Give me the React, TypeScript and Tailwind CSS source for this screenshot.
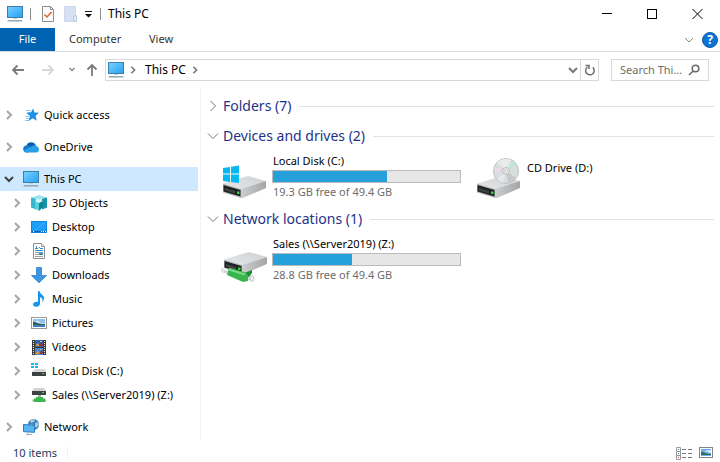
import { useState } from "react";
import type { ReactNode } from "react";

type IconProps = { className?: string };

const PcIcon = ({ className = "" }: IconProps) => (
  <svg className={`h-4 w-4 shrink-0 ${className}`} viewBox="0 0 16 16">
    <defs>
      <linearGradient id="screen" x1="0" y1="0" x2="1" y2="1">
        <stop offset="0" stopColor="#7cd0ff" />
        <stop offset="0.5" stopColor="#4dbafa" />
        <stop offset="1" stopColor="#2b9fee" />
      </linearGradient>
    </defs>
    <rect x="0.5" y="0.5" width="15" height="11" fill="url(#screen)" stroke="#3c7fa8" />
    <rect x="6" y="12" width="4" height="1" fill="#c3cfd8" />
    <path d="M1.500 14h13l1.500 1.500H0z" fill="#93a5b3" />
  </svg>
);

const StarIcon = () => (
  <svg className="h-4 w-4 shrink-0" viewBox="0 0 16 16">
    <path d="M3 3.500h5M4 5.500h4M2 9.500h4M3 11.500h3M2 13.500h4" stroke="#7ccaf7" />
    <path
      d="M10 1.500l1.500 4 4.500.3-3.400 3 1.200 5-4-2.600-4.300 2.800 1.500-5-3.500-3L8 5.500z"
      fill="#1e90e6"
    />
  </svg>
);

const CloudIcon = () => (
  <svg className="h-4 w-4 shrink-0" viewBox="0 0 16 16">
    <path d="M3.500 6.500a5 5 0 0 1 9.300 0L8 10z" fill="#0a5fb4" />
    <path d="M3.600 13.500A3.600 3.600 0 0 1 3 6.400c1.500-.4 2.800 0 4 .8l4 3-6 3.300z" fill="#1379d4" />
    <path d="M6.500 8.500l3-1.500c2-1.200 4-.6 4.400.4 3 .5 2.700 6-.6 6.100H3.600c-1.300 0-2.400-.7-3-1.700z" fill="#28a0e8" />
  </svg>
);

const CubeIcon = () => (
  <svg className="h-4 w-4 shrink-0" viewBox="0 0 16 16">
    <path d="M0 2.500L8 0l8 2.500L8 5z" fill="#9be4ee" />
    <path d="M0 2.500L5 4v10.500L0 12.500z" fill="#35b8cc" />
    <path d="M16 2.500L11 4v10.500l5-2z" fill="#1695aa" />
    <path d="M8 4.500l4 1.500v6L8 16z" fill="#0f8598" />
    <path d="M8 4.500L4 6v7.500L8 16z" fill="#55d0df" />
    <path d="M4 6l4-2 4 2-4 2z" fill="#d6f7fb" />
  </svg>
);

const DesktopIcon = () => (
  <svg className="h-4 w-4 shrink-0" viewBox="0 0 16 16">
    <rect x="0.500" y="2.500" width="15" height="11" fill="#1aa0fa" stroke="#1583d8" />
    <path d="M1 12.500h14" stroke="#0c5fa8" />
    <path d="M2 12.500h1M10 12.500h1M12 12.500h1M14 12.500h1" stroke="#fff" />
    <path d="M3 12L14 3" stroke="#3fb2ff" />
  </svg>
);

const DocumentIcon = () => (
  <svg className="h-4 w-4 shrink-0" viewBox="0 0 16 16">
    <path d="M2.500 0.500h8l3 3v12h-11z" fill="#fff" stroke="#8d8d8d" />
    <path d="M10.500 0.500v3h3" fill="#eee" stroke="#9b9b9b" />
    <path d="M4 5.500h3M8 4.500h1M4 7.500h8M9 5.500h3" stroke="#2c8bd0" />
    <path d="M5.500 6V3" stroke="#2c8bd0" />
    <path d="M4 9.500h4M4 11.500h4M4 13.500h8" stroke="#9aa3aa" />
    <path d="M8 9h4v3H8z" fill="#4d9bd0" />
    <path d="M8 12l2-1.500 2 1z" fill="#2b7246" />
  </svg>
);

const DownloadIcon = () => (
  <svg className="h-4 w-4 shrink-0" viewBox="0 0 16 16">
    <path d="M5.500 0.500h5v8h5L8 15.800.500 8.500h5z" fill="#3b97e3" stroke="#2c7fd0" strokeWidth="0.800" />
  </svg>
);

const MusicIcon = () => (
  <svg className="h-4 w-4 shrink-0" viewBox="0 0 16 16">
    <path
      d="M7 0h1.500c.2 3.300 4.500 3.500 4.500 7.200 0 1.700-.8 2.800-1.800 3.800.9-3-.2-4.200-2.200-4.700v6.200c0 2-1.800 3.300-3.700 3.300-2 0-3.200-1-3.200-2.300C2.100 11.500 4.700 10.300 7 11z"
      fill="#1495ef"
    />
  </svg>
);

const PictureIcon = () => (
  <svg className="h-4 w-4 shrink-0" viewBox="0 0 16 16">
    <rect x="0.500" y="2.500" width="15" height="11" fill="#fff" stroke="#999" />
    <rect x="2" y="4" width="12" height="8" fill="#8cc3f0" />
    <path d="M2 6h5l3 2 4 .5V10H2z" fill="#dcebf5" />
    <path d="M2 6.500c3 0 4 2.500 12 2.500v1H2z" fill="#2f6259" />
    <rect x="2" y="10" width="12" height="2" fill="#3c7fbd" />
  </svg>
);

const VideoIcon = () => (
  <svg className="h-4 w-4 shrink-0" viewBox="0 0 16 16">
    <rect x="1" y="1" width="14" height="15" fill="#3a3a3a" />
    <path d="M2.500 2v14M13.500 2v14" stroke="#e8e8e8" strokeDasharray="1 1" />
    <rect x="4" y="1" width="8" height="7" fill="#2d63b5" />
    <rect x="4" y="9" width="8" height="7" fill="#4f86d0" />
    <path d="M5 6l2-2 1 2v1H5zM5 14l2-2 1 2v1H5z" fill="#e0a52c" />
    <path d="M8 6l2-3 2 2v2H9zM9 14l1-3 2 2v2H9z" fill="#8f3440" />
    <path d="M9 2h2v1H9zM9 10h1v1H9z" fill="#e5c64e" />
  </svg>
);

const SmallDiskIcon = () => (
  <svg className="h-4 w-4 shrink-0" viewBox="0 0 16 16">
    <path d="M0 0h3v2H0zM4 0h3v2H4zM0 3h3v2H0zM4 3h3v2H4z" fill="#18b6ee" />
    <path d="M4 6h10l1 3H1z" fill="#d5d7d9" />
    <rect x="1" y="9" width="14" height="4" fill="#3f4245" />
    <rect x="11" y="10" width="2" height="1" fill="#35e03c" />
  </svg>
);

const SmallNetDiskIcon = () => (
  <svg className="h-4 w-4 shrink-0" viewBox="0 0 16 16">
    <path d="M3 1h10l2 3H1z" fill="#d0d2d4" />
    <rect x="1" y="4" width="14" height="4" fill="#3f4245" />
    <rect x="11" y="5" width="2" height="1" fill="#35e03c" />
    <path d="M7 8h3v3H7z" fill="#a9b0ac" />
    <path d="M5 10h7v1.500h2V15H3v-3.500h2z" fill="#3fb550" />
    <path d="M1.500 13.500H3M14 13.500h1" stroke="#8fae94" strokeWidth="2" />
  </svg>
);

const NetworkIcon = () => (
  <svg className="h-4 w-4 shrink-0" viewBox="0 0 16 16">
    <circle cx="10.500" cy="5.500" r="5.500" fill="#3b82b8" />
    <path d="M7 2c2-2 4-1.500 5-1l-1 2-3 1zM12 4l3-1 .8 3-2.800 3-1-2zM7 5l3 1v2H7z" fill="#a6cbe4" />
    <path d="M0.500 5.500l11 .8v7l-11-.6z" fill="#55b6f2" stroke="#2d7db8" />
    <path d="M5 13.500v1.500M3 15.500h6" stroke="#9fb0bc" />
  </svg>
);

// body of the big drive icons, shared by all three drives
const DriveBody = () => (
  <>
    <defs>
      <linearGradient id="driveTop" x1="0" y1="1" x2="1" y2="0">
        <stop offset="0" stopColor="#e6e7e9" />
        <stop offset="1" stopColor="#cfd1d3" />
      </linearGradient>
      <linearGradient id="driveSide" x1="0" y1="0" x2="1" y2="0">
        <stop offset="0" stopColor="#cbcdcf" />
        <stop offset="1" stopColor="#a3a5a7" />
      </linearGradient>
    </defs>
    <path d="M0 7.500L23 .5q2-.6 4 0l16 4.500-25 8.500z" fill="url(#driveTop)" />
    <path d="M18 13L43 5v7L21 21.500q-2 1-3 .5z" fill="url(#driveSide)" />
    <path d="M0 7.500l18 5.500v9L0 16.500z" fill="#b9bbbd" />
    <path d="M0.500 9l17 5v6.500l-17-5z" fill="#1f2223" />
    <path d="M2 12l10 3v2.500L2 14.500z" fill="#3f4346" />
    <rect x="14" y="15.500" width="2.500" height="2.500" fill="#2bdc36" />
  </>
);

const LocalDriveIcon = () => (
  <svg className="h-12 w-12 shrink-0" viewBox="0 0 48 48">
    <g transform="translate(3 25)">
      <DriveBody />
    </g>
    <path d="M3 17l7-1v6.500H3zM11 15.800l8-1.300v8h-8zM3 23.500h7V31l-7-1zM11 23.500h8V32l-8-1z" fill="#05b8f0" />
  </svg>
);

const CdDriveIcon = () => (
  <svg className="h-12 w-12 shrink-0" viewBox="0 0 48 48">
    <g transform="translate(3 25)">
      <DriveBody />
    </g>
    <circle cx="32" cy="20" r="12.500" fill="#d9dddd" stroke="#bcc2c2" />
    <path d="M32 20L23 11.500a12 12 0 0 1 14-2.500z" fill="#e9ebeb" />
    <path d="M32 20l7-9.500a12 12 0 0 1 3 3z" fill="#b5ecd2" />
    <path d="M32 20l-11.500-4v5z" fill="#ecd9ec" />
    <path d="M32 20l2 12a12 12 0 0 0 8-5z" fill="#c3c8c8" />
    <path d="M32 20l-9 8a12 12 0 0 0 6 4z" fill="#e6e9e9" />
    <circle cx="32" cy="20" r="3.500" fill="#eceeee" stroke="#b5baba" />
    <circle cx="32" cy="20" r="1.500" fill="#fff" stroke="#b5baba" strokeWidth="0.800" />
  </svg>
);

const NetDriveIcon = () => (
  <svg className="h-12 w-12 shrink-0" viewBox="0 0 48 48">
    <g transform="translate(4 18)">
      <DriveBody />
    </g>
    <path d="M1.500 33.500l31 8.500-1 5-30-9z" fill="#d3d6d4" />
    <path d="M2 34.500l30 8.500" stroke="#f3f4f3" strokeWidth="2" />
    <path d="M22 40l10-4v3l-3 4z" fill="#1f8f33" />
    <path d="M9 33.500l15 4.500 4 3v6l-5 1L7 41z" fill="#3ab54e" />
    <path d="M9 35.500l16 5" stroke="#7ed98b" strokeWidth="2" />
    <ellipse cx="2.500" cy="36" rx="1.500" ry="2.500" fill="#e4e6e5" />
    <ellipse cx="32" cy="44.500" rx="2" ry="2.800" fill="#eef0ef" stroke="#bfc3c1" />
  </svg>
);

const Chevron = ({ down = false, className = "h-2.5 w-2.5" }: { down?: boolean; className?: string }) => (
  <svg className={`shrink-0 ${className}`} viewBox="0 0 10 10" fill="none" stroke="currentColor">
    <path d={down ? "M1 3l4 4 4-4" : "M3 1l4 4-4 4"} />
  </svg>
);

const Divider = () => <span className="h-3 w-px bg-[#8f8f8f]" />;

type TreeItem = { name: string; icon: ReactNode; root?: boolean; gap?: boolean };

const tree: TreeItem[] = [
  { name: "Quick access", icon: <StarIcon />, root: true },
  { name: "OneDrive", icon: <CloudIcon />, root: true, gap: true },
  { name: "This PC", icon: <PcIcon />, root: true, gap: true },
  { name: "3D Objects", icon: <CubeIcon /> },
  { name: "Desktop", icon: <DesktopIcon /> },
  { name: "Documents", icon: <DocumentIcon /> },
  { name: "Downloads", icon: <DownloadIcon /> },
  { name: "Music", icon: <MusicIcon /> },
  { name: "Pictures", icon: <PictureIcon /> },
  { name: "Videos", icon: <VideoIcon /> },
  { name: "Local Disk (C:)", icon: <SmallDiskIcon /> },
  { name: "Sales (\\\\Server2019) (Z:)", icon: <SmallNetDiskIcon /> },
  { name: "Network", icon: <NetworkIcon />, root: true, gap: true },
];

function TitleBar() {
  return (
    <header className="flex h-7 items-center pl-[7px]">
      <PcIcon />
      <span className="w-[7px]" />
      <Divider />
      <button aria-label="Properties" className="ml-[11px]">
        <svg className="h-4 w-3" viewBox="0 0 12 16">
          <path d="M0.500 0.500h8l3 3v12h-11z" fill="#fafafa" stroke="#8c8c8c" />
          <path d="M8.500 0.500v3h3" fill="none" stroke="#8c8c8c" />
          <path d="M2.500 8.500l2.500 2.500 4.500-5" fill="none" stroke="#e8602c" strokeWidth="1.500" />
        </svg>
      </button>
      <button aria-label="New folder" className="ml-[10px]">
        <svg className="h-4 w-[13px]" viewBox="0 0 13 16">
          <path d="M0.500 0.500h11v9h1v6h-12z" fill="#d6e1f4" stroke="#cbd8ee" />
          <path d="M9.500 15V10h3v5.500z" fill="#e6edf9" stroke="#bccbe4" />
        </svg>
      </button>
      <button aria-label="Customize Quick Access Toolbar" className="ml-2">
        <svg className="h-4 w-[7px]" viewBox="0 0 7 16">
          <path d="M0 5h7v1H0zM0 8h7L3.500 11.500z" fill="#111" />
        </svg>
      </button>
      <span className="w-2" />
      <Divider />
      <h1 className="ml-[7px] flex-1 text-xs text-black">This PC</h1>
      <button aria-label="Minimize" className="flex h-6 w-[45px] items-center justify-center">
        <svg className="h-[11px] w-[11px]" viewBox="0 0 11 11" fill="#000">
          <path d="M0 4h10v1H0z" />
        </svg>
      </button>
      <button aria-label="Maximize" className="flex h-6 w-[45px] items-center justify-center">
        <svg className="h-[11px] w-[11px]" viewBox="0 0 11 11" stroke="#000" fill="none">
          <rect x="0.500" y="0.500" width="9" height="9" />
        </svg>
      </button>
      <button aria-label="Close" className="flex h-6 w-[45px] items-center justify-center">
        <svg className="h-[11px] w-[11px]" viewBox="0 0 11 11" stroke="#000">
          <path d="M0.500 0l10 10M10.500 0l-10 10" />
        </svg>
      </button>
    </header>
  );
}

function Ribbon() {
  return (
    <div className="flex h-6 items-stretch border-b border-[#dadbdc] text-[11px] text-[#333]">
      <button className="w-[55px] bg-[#0063b1] text-white">File</button>
      <button className="ml-3.5 w-20 text-left">Computer</button>
      <button className="w-8 text-left">View</button>
      <div className="ml-auto flex items-center gap-2 pr-0.5">
        <button aria-label="Expand the Ribbon">
          <Chevron down className="h-2.5 w-2.5 text-[#888]" />
        </button>
        <button
          aria-label="Help"
          className="h-4 w-4 rounded-full border border-[#0b5cab] bg-[#0b74d4] text-xs leading-3.5 font-bold text-white"
        >
          ?
        </button>
      </div>
    </div>
  );
}

function AddressBar() {
  return (
    <div className="flex h-9 items-center pr-[11px] pl-3 text-xs">
      <button aria-label="Back">
        <svg className="h-3 w-3" viewBox="0 0 12 12" fill="none" stroke="#7a7a7a" strokeWidth="1.800">
          <path d="M12 6H1M5.500 1.500L1 6l4.500 4.500" />
        </svg>
      </button>
      <button aria-label="Forward" className="ml-[18px]">
        <svg className="h-3 w-3" viewBox="0 0 12 12" fill="none" stroke="#d8d8d8" strokeWidth="1.800">
          <path d="M0 6h11M6.500 1.500L11 6l-4.500 4.500" />
        </svg>
      </button>
      <button aria-label="Recent locations" className="ml-3.5">
        <svg className="h-2 w-2" viewBox="0 0 8 8" fill="none" stroke="#8a8a8a" strokeWidth="1.500">
          <path d="M1.500 2L4 4.500 6.500 2" />
        </svg>
      </button>
      <button aria-label="Up" className="ml-2.5">
        <svg className="h-3 w-3" viewBox="0 0 12 12" fill="none" stroke="#7a7a7a" strokeWidth="1.800">
          <path d="M6 12V1M1.500 5.500L6 1l4.500 4.500" />
        </svg>
      </button>
      <div className="ml-[7px] flex h-[22px] flex-1 items-center border border-[#d9d9d9] pl-0.5">
        <PcIcon />
        <Chevron className="ml-[5px] h-2 w-2 stroke-2 text-[#777]" />
        <button className="ml-2">This PC</button>
        <Chevron className="ml-[5px] h-2 w-2 stroke-2 text-[#777]" />
        <button aria-label="Previous locations" className="mr-0.5 ml-auto">
          <Chevron down className="h-2.5 w-2.5 stroke-2 text-[#777]" />
        </button>
        <button aria-label="Refresh" className="flex h-full w-[18px] items-center justify-center border-l border-[#d9d9d9]">
          <svg className="h-3 w-3" viewBox="0 0 12 12" fill="none" stroke="#6f6f6f" strokeWidth="1.500">
            <path d="M3.500 3A4.300 4.300 0 1 0 8.800 3.400" />
            <path d="M1.500 1.500h3.500V5" />
          </svg>
        </button>
      </div>
      <label className="ml-3 flex h-[22px] w-[98px] items-center border border-[#d9d9d9] pr-2 pl-2 text-[11px]">
        <input
          aria-label="Search This PC"
          placeholder="Search Thi..."
          className="w-0 flex-1 outline-none placeholder:text-[#6d6d6d]"
        />
        <svg className="h-3 w-3 shrink-0" viewBox="0 0 12 12" fill="none" stroke="#6b6b6b" strokeWidth="1.600">
          <circle cx="7.500" cy="4.500" r="3.300" />
          <path d="M5.200 7L1 11" />
        </svg>
      </label>
    </div>
  );
}

function Tree() {
  const [active, setActive] = useState("This PC");
  return (
    <nav className="w-[201px] shrink-0 border-r border-[#f3f3f3] pt-[15px] pr-0.5">
      {tree.map((item) => {
        const open = item.name === "This PC";
        return (
          <button
            key={item.name}
            onClick={() => setActive(item.name)}
            className={`flex h-6 w-full items-center text-left text-[11px] whitespace-nowrap text-black ${
              item.root ? "pl-1" : "pl-3"
            } ${item.gap ? "mt-2" : ""} ${active === item.name ? "bg-[#cde8ff]" : ""}`}
          >
            <Chevron
              down={open}
              className={`h-2.5 w-2.5 stroke-2 ${open ? "text-[#404040]" : "text-[#a6a6a6]"}`}
            />
            <span className="ml-[9px]">{item.icon}</span>
            <span className="ml-[5px]">{item.name}</span>
          </button>
        );
      })}
    </nav>
  );
}

function Group({ title, open = true, children }: { title: string; open?: boolean; children?: ReactNode }) {
  return (
    <section>
      <h2 className="flex h-[30px] items-center text-sm text-[#1e3287]">
        <button className="flex items-center gap-1">
          <svg className="h-3 w-3" viewBox="0 0 12 12" fill="none" stroke="#767676">
            <path d={open ? "M1 3.500l5 5 5-5" : "M3.500 1l5 5-5 5"} />
          </svg>
          {title}
        </button>
        <span className="ml-2 h-px flex-1 bg-[#e2e2e2]" />
      </h2>
      {children}
    </section>
  );
}

function Drive({ icon, name, used, free }: { icon: ReactNode; name: string; used?: number; free?: string }) {
  return (
    <button className="flex w-[254px] shrink-0 items-start gap-1 pl-[13px] text-left text-[11px] leading-4">
      {icon}
      {used === undefined ? (
        <span className="pt-[9px] pl-px text-black">{name}</span>
      ) : (
        <span className="flex-1 pt-0.5 text-black">
          <span className="block pl-px">{name}</span>
          <span
            role="progressbar"
            aria-label={name}
            aria-valuenow={used}
            className="mt-px block h-[13px] w-[189px] border border-[#bcbcbc] bg-[#e6e6e6]"
          >
            <span className="block h-full bg-[#26a0da]" style={{ width: `${used}%` }} />
          </span>
          <span className="mt-px block pl-px text-[#6d6d6d]">{free}</span>
        </span>
      )}
    </button>
  );
}

function StatusBar() {
  return (
    <footer className="flex h-[22px] items-center pt-1 pr-[7px] text-[11px] text-[#1e395b]">
      <span className="pl-[13px]">10 items</span>
      <span className="ml-2.5 h-3 w-px bg-[#f0f0f0]" />
      <button aria-label="Details view" className="ml-auto">
        <svg className="h-[13px] w-4" viewBox="0 0 16 13" fill="none">
          <path d="M0.500 0.500h4v12h-4zM0.500 4.500h4M0.500 8.500h4" stroke="#999" />
          <path d="M2 2.500h1" stroke="#3f9a76" />
          <path d="M2 6.500h1" stroke="#259be8" />
          <path d="M2 10.500h1" stroke="#e03535" />
          <path d="M6 2.500h4M12 2.500h4M6 6.500h4M12 6.500h4M6 10.500h4M12 10.500h4" stroke="#777" />
        </svg>
      </button>
      <button aria-label="Large icons view" className="ml-[7px]">
        <svg className="h-3 w-3.5" viewBox="0 0 14 12">
          <rect x="0.500" y="0.500" width="13" height="10" fill="#fff" stroke="#858585" />
          <rect x="2" y="2" width="10" height="7" fill="#6aaeea" />
          <path d="M5 4l7-1v3z" fill="#e5f1fa" />
          <path d="M2 5c4 0 5 2 10 2v1H2z" fill="#366c5e" />
        </svg>
      </button>
    </footer>
  );
}

export default function App() {
  return (
    <div className="flex min-h-screen flex-col bg-white font-['Noto_Sans','Open_Sans',sans-serif]">
      <TitleBar />
      <Ribbon />
      <AddressBar />
      <div className="flex flex-1">
        <Tree />
        <main className="min-w-0 flex-1 pt-[3px] pr-1.5 pl-1.5">
          <Group title="Folders (7)" open={false} />
          <Group title="Devices and drives (2)">
            <div className="flex pb-1">
              <Drive icon={<LocalDriveIcon />} name="Local Disk (C:)" used={61} free="19.3 GB free of 49.4 GB" />
              <Drive icon={<CdDriveIcon />} name="CD Drive (D:)" />
            </div>
          </Group>
          <Group title="Network locations (1)">
            <div className="flex">
              <Drive
                icon={<NetDriveIcon />}
                name={"Sales (\\\\Server2019) (Z:)"}
                used={42}
                free="28.8 GB free of 49.4 GB"
              />
            </div>
          </Group>
        </main>
      </div>
      <StatusBar />
    </div>
  );
}
